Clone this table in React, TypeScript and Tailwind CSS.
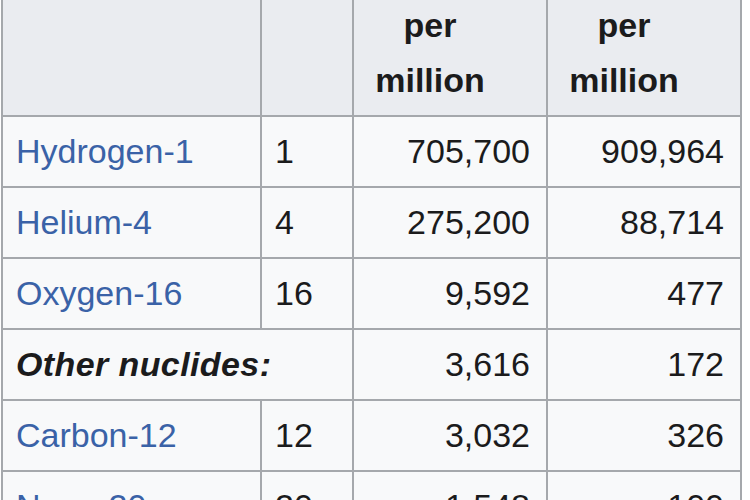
const rows = [
  { name: "Hydrogen-1", a: "1", mass: "705,700", atom: "909,964" },
  { name: "Helium-4", a: "4", mass: "275,200", atom: "88,714" },
  { name: "Oxygen-16", a: "16", mass: "9,592", atom: "477" },
  { other: true, name: "Other nuclides:", mass: "3,616", atom: "172" },
  { name: "Carbon-12", a: "12", mass: "3,032", atom: "326" },
  { name: "Neon-20", a: "20", mass: "1,548", atom: "100" },
];

const cell = "bg-[#f8f9fa] px-[13px] py-[7px]";
const num = "bg-[#f8f9fa] pl-[13px] pr-[16px] py-[7px] text-right";
const head = "bg-[#eaecf0] pl-[13px] pr-[53px] py-[7px] text-center font-bold";

export default function App() {
  return (
    <div className="h-[500px] w-[750px] overflow-hidden bg-white font-['Liberation_Sans',Arial,sans-serif] text-[34px] leading-[55px] text-[#1b1b1c]">
      <div className="ml-[1px] -mt-[11px] grid w-fit grid-cols-[257px_90px_192px_192px] gap-[2px] bg-[#a5a8ac] p-[2px]">
        <div className="bg-[#eaecf0]" />
        <div className="bg-[#eaecf0]" />
        <div className={head}>
          per
          <br />
          million
        </div>
        <div className={head}>
          per
          <br />
          million
        </div>

        {rows.map((r) =>
          r.other ? (
            <div key={r.name} className="contents">
              <div className={`${cell} col-span-2 font-bold italic tracking-[0.4px]`}>{r.name}</div>
              <div className={num}>{r.mass}</div>
              <div className={num}>{r.atom}</div>
            </div>
          ) : (
            <div key={r.name} className="contents">
              <div className={`${cell} text-[#3a62a7]`}>{r.name}</div>
              <div className={cell}>{r.a}</div>
              <div className={num}>{r.mass}</div>
              <div className={num}>{r.atom}</div>
            </div>
          )
        )}
      </div>
    </div>
  );
}
